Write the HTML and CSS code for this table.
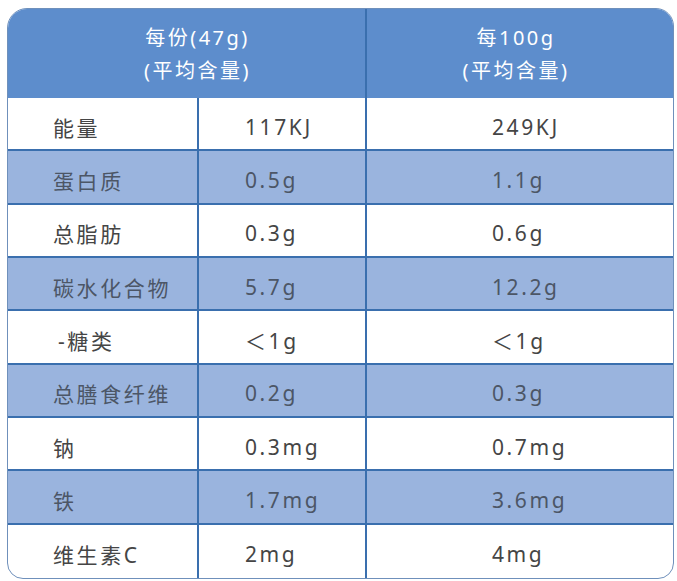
FILE: index.html
```html
<!DOCTYPE html>
<html lang="zh-CN">
<head>
<meta charset="utf-8">
<title>营养成分表</title>
<link rel="stylesheet" href="styles.css">
</head>
<body>
<div class="card">
  <table class="nutri">
    <colgroup>
      <col class="c1">
      <col class="c2">
      <col class="c3">
    </colgroup>
    <thead>
      <tr>
        <th class="h-serving" colspan="2">每份(47g)<br>(平均含量)</th>
        <th class="h-100">每100g<br>(平均含量)</th>
      </tr>
    </thead>
    <tbody>
      <tr><td class="name">能量</td><td class="v1">117KJ</td><td class="v2">249KJ</td></tr>
      <tr class="alt"><td class="name">蛋白质</td><td class="v1">0.5g</td><td class="v2">1.1g</td></tr>
      <tr><td class="name">总脂肪</td><td class="v1">0.3g</td><td class="v2">0.6g</td></tr>
      <tr class="alt"><td class="name">碳水化合物</td><td class="v1">5.7g</td><td class="v2">12.2g</td></tr>
      <tr><td class="name sub">-糖类</td><td class="v1">＜1g</td><td class="v2">＜1g</td></tr>
      <tr class="alt"><td class="name">总膳食纤维</td><td class="v1">0.2g</td><td class="v2">0.3g</td></tr>
      <tr><td class="name">钠</td><td class="v1">0.3mg</td><td class="v2">0.7mg</td></tr>
      <tr class="alt"><td class="name">铁</td><td class="v1">1.7mg</td><td class="v2">3.6mg</td></tr>
      <tr class="last"><td class="name">维生素C</td><td class="v1">2mg</td><td class="v2">4mg</td></tr>
    </tbody>
  </table>
</div>
</body>
</html>
```

FILE: styles.css
```css
html, body {
  margin: 0;
  padding: 0;
  background: #ffffff;
}

body {
  font-family: "Noto Sans", "Noto Sans CJK SC", sans-serif;
}

.card {
  box-sizing: border-box;
  width: 667px;
  height: 571px;
  margin: 8px 0 0 7px;
  border: 1px solid #6f90bb;
  border-radius: 20px 18px 16px 16px;
  overflow: hidden;
  background: #ffffff;
}

.nutri {
  width: 665px;
  border-collapse: separate;
  border-spacing: 0;
  table-layout: fixed;
}

.c1 { width: 191px; }
.c2 { width: 168px; }
.c3 { width: 306px; }

.nutri th,
.nutri td {
  box-sizing: border-box;
  padding: 0;
}

.nutri thead th {
  height: 89px;
  background: #5d8dcc;
  color: #ffffff;
  font-weight: normal;
  font-size: 20px;
  line-height: 33px;
  letter-spacing: 2.5px;
  text-align: center;
  vertical-align: middle;
  padding-top: 1px;
}

.h-serving {
  border-right: 2px solid #3a6fae;
  padding-left: 22px !important;
}

.h-100 {
  padding-right: 8px !important;
}

.nutri tbody td {
  height: 53.33px;
  border-bottom: 2px solid #3a6fae;
  font-size: 21px;
  letter-spacing: 2.6px;
  color: #454545;
  vertical-align: middle;
  text-align: left;
  padding-top: 6px;
  white-space: nowrap;
}

.nutri tbody tr.last td {
  border-bottom: none;
}

.nutri tbody tr.alt td {
  background: #9ab4de;
  color: #4c5666;
}

.name {
  padding-left: 45px !important;
  border-right: 2px solid #3a6fae;
}

.name.sub {
  padding-left: 50px !important;
}

.v1 {
  padding-left: 46px !important;
  border-right: 2px solid #3a6fae;
}

.v2 {
  padding-left: 125px !important;
}
```
